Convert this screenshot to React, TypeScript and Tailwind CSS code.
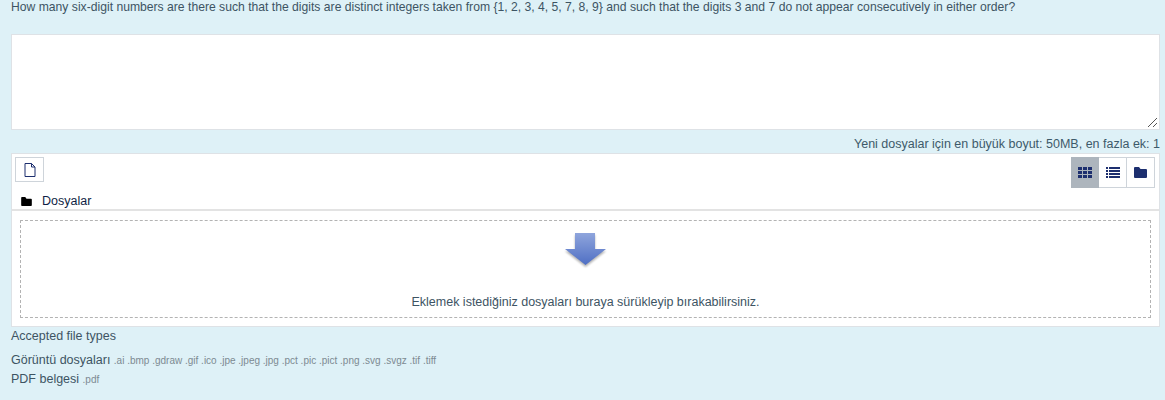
export default function App() {
  return (
    <div className="w-[1165px] h-[400px] overflow-hidden bg-[#def1f7] text-[#373a3c] font-['Liberation_Sans',Arial,sans-serif]">
      <div className="pl-[11px] pr-[5px]">
        <p className="h-[34px] text-[12.175px] leading-[14px] whitespace-nowrap text-[#3d5463]">How many six-digit numbers are there such that the digits are distinct integers taken from {"{1, 2, 3, 4, 5, 7, 8, 9}"} and such that the digits 3 and 7 do not appear consecutively in either order?</p>
        <div className="relative h-[96px] bg-white border border-[#dee2e6]">
          <svg className="absolute right-[1px] bottom-[1px]" width="11" height="11" viewBox="0 0 11 11">
            <path d="M1 10L10 1M6 10L10 6" stroke="#555" strokeWidth="1" fill="none" />
          </svg>
        </div>
        <div className="h-[23px] pt-[6px] text-right text-[12.5px] leading-[16px] text-[#3d5a6a]">Yeni dosyalar için en büyük boyut: 50MB, en fazla ek: 1</div>
        <div className="h-[174px] bg-white border border-[#dee2e6]">
          <div className="flex items-start justify-between pl-[3px] pr-[4px] pt-[3px] h-[36px]">
            <div className="w-[29px] h-[25px] border border-[#ced4da] flex items-center justify-center">
              <svg width="12" height="14" viewBox="0 0 12 14" fill="none">
                <path d="M1 .5H7.5L11 4V13.5H1Z M7.5 .5V4H11" stroke="#1d2f6f" strokeWidth="1" />
              </svg>
            </div>
            <div className="flex h-[31px]">
              <div className="w-[28px] bg-[#adb5bd] flex items-center justify-center">
                <svg width="14" height="11" viewBox="0 0 14 11" fill="#1d2f6f">
                  <rect x="0" y="0" width="4" height="3" /><rect x="5" y="0" width="4" height="3" /><rect x="10" y="0" width="4" height="3" />
                  <rect x="0" y="4" width="4" height="3" /><rect x="5" y="4" width="4" height="3" /><rect x="10" y="4" width="4" height="3" />
                  <rect x="0" y="8" width="4" height="3" /><rect x="5" y="8" width="4" height="3" /><rect x="10" y="8" width="4" height="3" />
                </svg>
              </div>
              <div className="w-[28px] border-y border-r border-[#ced4da] flex items-center justify-center">
                <svg width="14" height="11" viewBox="0 0 14 11" fill="#1d2f6f">
                  <rect x="0" y="0" width="2" height="2" /><rect x="3" y="0" width="11" height="2" />
                  <rect x="0" y="3" width="2" height="2" /><rect x="3" y="3" width="11" height="2" />
                  <rect x="0" y="6" width="2" height="2" /><rect x="3" y="6" width="11" height="2" />
                  <rect x="0" y="9" width="2" height="2" /><rect x="3" y="9" width="11" height="2" />
                </svg>
              </div>
              <div className="w-[28px] border-y border-r border-[#ced4da] flex items-center justify-center">
                <svg width="13" height="11" viewBox="0 0 13 11" fill="#1d2f6f">
                  <path d="M1 0H5L6.5 2H12a1 1 0 0 1 1 1V10a1 1 0 0 1-1 1H1a1 1 0 0 1-1-1V1a1 1 0 0 1 1-1Z" />
                </svg>
              </div>
            </div>
          </div>
          <div className="h-[21px] border-b-2 border-[#e3e3e3] flex items-center pl-[9px] pt-[3px]">
            <svg width="11" height="9" viewBox="0 0 13 11" fill="#000">
              <path d="M1 0H5L6.5 2H12a1 1 0 0 1 1 1V10a1 1 0 0 1-1 1H1a1 1 0 0 1-1-1V1a1 1 0 0 1 1-1Z" />
            </svg>
            <span className="ml-[10px] text-[12.5px] text-[#0f1e45]">Dosyalar</span>
          </div>
          <div className="mx-[8px] mt-[9px] h-[98px] border border-dashed border-[#b3b3b3] flex flex-col items-center">
            <svg className="mt-[12px] overflow-visible" width="44" height="35" viewBox="0 0 44 35">
              <defs>
                <linearGradient id="g" x1="0" y1="0" x2="0" y2="1">
                  <stop offset="0" stopColor="#8fa5dc" />
                  <stop offset="1" stopColor="#4f6fc4" />
                </linearGradient>
                <filter id="b" x="-20%" y="-20%" width="140%" height="140%">
                  <feGaussianBlur stdDeviation="1.2" />
                </filter>
              </defs>
              <path d="M11 0H31V16H42L21.5 32L1 16H11Z" transform="translate(0 2)" fill="#000" opacity="0.3" filter="url(#b)" />
              <path d="M11 0H31V16H42L21.5 32L1 16H11Z" fill="url(#g)" />
            </svg>
            <div className="mt-[26px] text-[12.5px] leading-[16px] text-[#3d5463]">Eklemek istediğiniz dosyaları buraya sürükleyip bırakabilirsiniz.</div>
          </div>
        </div>
        <div className="mt-[1px] text-[12.5px] leading-[16px] text-[#3d5463]">Accepted file types</div>
        <div className="mt-[7px] text-[12.5px] leading-[18px] text-[#3d5463]">
          <div>Görüntü dosyaları <span className="text-[10px] text-[#7d8a92]">.ai .bmp .gdraw .gif .ico .jpe .jpeg .jpg .pct .pic .pict .png .svg .svgz .tif .tiff</span></div>
          <div>PDF belgesi <span className="text-[10px] text-[#7d8a92]">.pdf</span></div>
        </div>
      </div>
    </div>
  );
}
